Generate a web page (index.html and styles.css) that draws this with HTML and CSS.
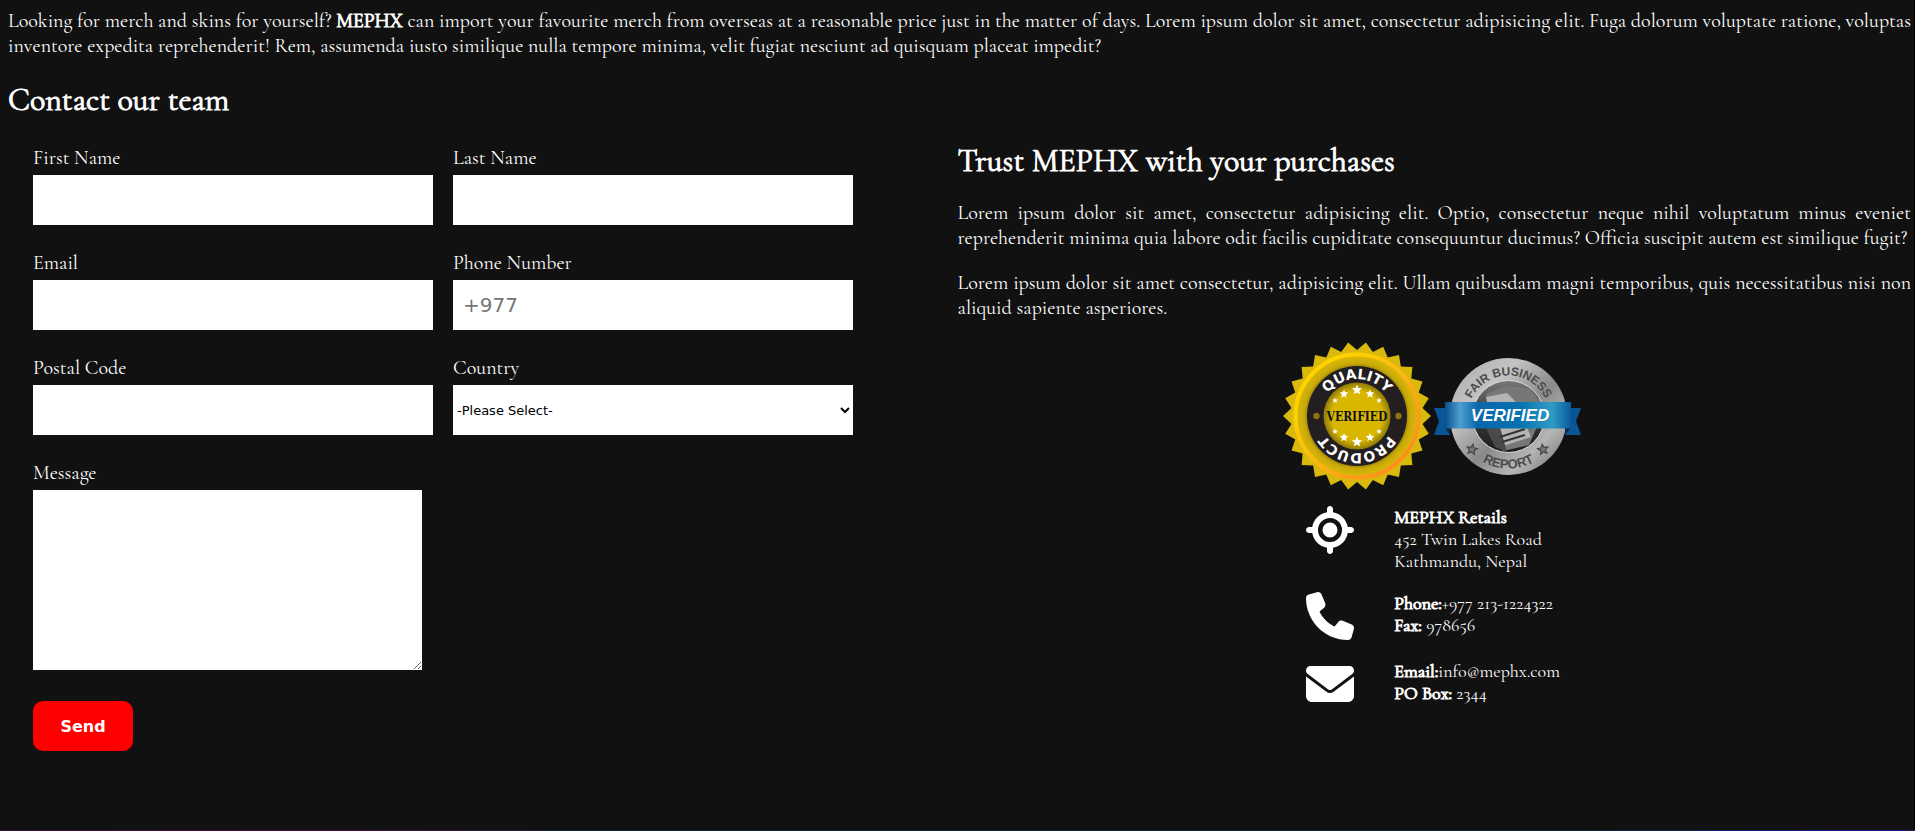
FILE: index.html
```
<!DOCTYPE html>
<html lang="en">
<head>
<meta charset="utf-8">
<title>MEPHX - Contact</title>
<link rel="stylesheet" href="styles.css">
</head>
<body>
<main class="page">
  <p class="text">Looking for merch and skins for yourself? <strong>MEPHX</strong> can import your favourite merch from overseas at a reasonable price just in the matter of days. Lorem ipsum dolor sit amet, consectetur adipisicing elit. Fuga dolorum voluptate ratione, voluptas inventore expedita reprehenderit! Rem, assumenda iusto similique nulla tempore minima, velit fugiat nesciunt ad quisquam placeat impedit?</p>
  <h1 class="heading">Contact our team</h1>
  <div class="columns">
    <form class="form">
      <div class="field"><label for="first">First Name</label><input class="control" id="first" type="text"></div>
      <div class="field"><label for="last">Last Name</label><input class="control" id="last" type="text"></div>
      <div class="field"><label for="email">Email</label><input class="control" id="email" type="email"></div>
      <div class="field"><label for="phone">Phone Number</label><input class="control" id="phone" type="tel" placeholder="+977"></div>
      <div class="field"><label for="postal">Postal Code</label><input class="control" id="postal" type="text"></div>
      <div class="field"><label for="country">Country</label><select class="control select" id="country"><option>-Please Select-</option><option>Nepal</option></select></div>
      <div class="field"><label for="message">Message</label><textarea class="message" id="message"></textarea></div>
      <div class="actions"><button class="send" type="submit">Send</button></div>
    </form>
    <section class="trust">
      <h2 class="heading">Trust MEPHX with your purchases</h2>
      <p class="text">Lorem ipsum dolor sit amet, consectetur adipisicing elit. Optio, consectetur neque nihil voluptatum minus eveniet reprehenderit minima quia labore odit facilis cupiditate consequuntur ducimus? Officia suscipit autem est similique fugit?</p>
      <p class="text">Lorem ipsum dolor sit amet consectetur, adipisicing elit. Ullam quibusdam magni temporibus, quis necessitatibus nisi non aliquid sapiente asperiores.</p>
      <div class="badges">
        <svg class="badge" viewBox="-75 -75 150 150" role="img" aria-label="Quality product verified">
          <defs>
            <linearGradient id="rim" x1="0" y1="0" x2="1" y2="1"><stop offset="0.2" stop-color="#ffd200"/><stop offset="0.5" stop-color="#fdb913"/><stop offset="0.85" stop-color="#ff8f1c"/></linearGradient>
            <radialGradient id="gold"><stop offset="0.76" stop-color="#7a6806"/><stop offset="0.86" stop-color="#c9a90a"/><stop offset="1" stop-color="#dcbb08"/></radialGradient>
            <radialGradient id="core"><stop offset="0.75" stop-color="#d9b700"/><stop offset="1" stop-color="#8f7a08"/></radialGradient>
            <path id="teeth" d="M0-66L8.9-73.5 15.8-64.1 26.2-69.2 30.7-58.4 42-60.9 43.8-49.4 55.4-49.1 54.3-37.5 65.5-34.4 61.7-23.4 71.8-17.7 65.5-8 74 0 65.5 8 71.8 17.7 61.7 23.4 65.5 34.4 54.3 37.5 55.4 49.1 43.8 49.4 42 60.9 30.7 58.4 26.2 69.2 15.8 64.1 8.9 73.5 0 66Z"/>
            <path id="star" d="M0-1L.26-.36.95-.31.42.14.59.81 0 .44-.59.81-.42.14-.95-.31-.26-.36Z"/>
            <path id="arcTop" d="M-37 0A37 37 0 0 1 37 0"/>
            <path id="arcBottom" d="M37 0A37 37 0 0 1-37 0"/>
          </defs>
          <g fill="#d9b90c"><use href="#teeth"/><use href="#teeth" transform="scale(-1 1)"/><circle r="66"/></g>
          <circle r="61.5" fill="url(#gold)" stroke="url(#rim)" stroke-width="4"/>
          <circle r="50" fill="#231f20"/>
          <circle r="33.5" fill="url(#core)"/>
          <g fill="#8a7412"><circle cx="-40.5" r="3.2"/><circle cx="41.5" r="3.2"/></g>
          <g class="seal-arc"><text><textPath href="#arcTop" startOffset="50%">QUALITY</textPath></text><text><textPath href="#arcBottom" startOffset="50%">PRODUCT</textPath></text></g>
          <g fill="#fff">
            <use href="#star" transform="translate(0 -26) scale(5.4)"/><use href="#star" transform="translate(-13 -22) scale(4.6)"/><use href="#star" transform="translate(13 -22) scale(4.6)"/><use href="#star" transform="translate(-22 -15.5) scale(3)"/><use href="#star" transform="translate(22 -15.5) scale(3)"/>
            <use href="#star" transform="translate(0 26) scale(5.4)"/><use href="#star" transform="translate(-13 21.5) scale(4.6)"/><use href="#star" transform="translate(13 21.5) scale(4.6)"/><use href="#star" transform="translate(-22 15.5) scale(3)"/><use href="#star" transform="translate(22 15.5) scale(3)"/>
          </g>
          <text class="seal-title" y="5">VERIFIED</text>
        </svg>
        <svg class="badge" viewBox="0 0 150 150" role="img" aria-label="Fair business report verified">
          <defs>
            <linearGradient id="steel" x1="0" y1="0" x2="1" y2="1"><stop offset="0" stop-color="#aaa"/><stop offset="0.3" stop-color="#c4c4c4"/><stop offset="0.55" stop-color="#8a8a8a"/><stop offset="0.75" stop-color="#b5b5b5"/><stop offset="1" stop-color="#666"/></linearGradient>
            <linearGradient id="dark" x1="0" y1="0" x2="0" y2="1"><stop offset="0" stop-color="#777"/><stop offset="0.5" stop-color="#3a3a3a"/><stop offset="1" stop-color="#1c1c1c"/></linearGradient>
            <linearGradient id="ribbon"><stop offset="0" stop-color="#0b4f91"/><stop offset="0.12" stop-color="#4f9fd0"/><stop offset="0.26" stop-color="#0a66ab"/><stop offset="0.6" stop-color="#0672b0"/><stop offset="0.85" stop-color="#2f9cc4"/><stop offset="1" stop-color="#0b5a9b"/></linearGradient>
            <path id="ringTop" d="M34.5 75.500A41 41 0 0 1 116.500 75.500"/>
            <path id="ringBottom" d="M23.500 75.500A52 52 0 0 0 127.500 75.500"/>
          </defs>
          <circle cx="75.500" cy="75.500" r="58.500" fill="url(#steel)"/>
          <circle cx="75.500" cy="75.500" r="36" fill="url(#dark)" stroke="#ddd"/>
          <path d="M53 53L72 45 96 47 108 61 103 88 96 104 70 110 58 95Z" fill="#777"/>
          <path d="M53 56L74 52 83 61 98 96 64 107Z" fill="#b4b4b4"/>
          <path d="M53 87L66 83 74 111 62 106Z" fill="#4a4a4a"/>
          <path d="M67 96L92 88M69 101L92 94" stroke="#333" stroke-width="2"/>
          <g class="ring-text"><text><textPath href="#ringTop" startOffset="50%">FAIR BUSINESS</textPath></text><text class="ring-foot"><textPath href="#ringBottom" startOffset="50%">REPORT</textPath></text></g>
          <g fill="#777" stroke="#444" stroke-width="0.200"><use href="#star" transform="translate(39 108.500) rotate(10) scale(5.500)"/><use href="#star" transform="translate(110 108.500) rotate(-10) scale(5.500)"/></g>
          <path d="M1 67H17V94H1L6 80ZM148 67H132V94H148L143 80Z" fill="#0a5596"/>
          <path d="M12 87L17 94V87ZM138 87L132 94V87Z" fill="#062b55"/>
          <path d="M12 61H138V87.500H12Z" fill="url(#ribbon)"/>
          <text class="ribbon-title" x="77" y="80">VERIFIED</text>
        </svg>
      </div>
      <div class="contacts">
        <svg class="icon" viewBox="0 0 512 512" aria-hidden="true"><path fill-rule="evenodd" d="M256 0c17.700 0 32 14.300 32 32V66.700C368.400 80.100 431.900 143.600 445.300 224H480c17.700 0 32 14.300 32 32s-14.300 32-32 32H445.300C431.900 368.400 368.400 431.900 288 445.300V480c0 17.700-14.300 32-32 32s-32-14.300-32-32V445.300C143.600 431.900 80.100 368.400 66.700 288H32c-17.700 0-32-14.300-32-32s14.300-32 32-32H66.700C80.100 143.600 143.600 80.100 224 66.700V32c0-17.700 14.300-32 32-32zM128 256a128 128 0 1 0 256 0 128 128 0 1 0-256 0zm128-80a80 80 0 1 1 0 160 80 80 0 1 1 0-160z"/></svg>
        <p class="detail"><strong>MEPHX Retails</strong><br>452 Twin Lakes Road<br>Kathmandu, Nepal</p>
        <svg class="icon" viewBox="0 0 512 512" aria-hidden="true"><path d="M164.900 24.600c-7.700-18.600-28-28.500-47.400-23.200l-88 24C12.100 30.200 0 46 0 64C0 311.400 200.600 512 448 512c18 0 33.800-12.100 38.600-29.500l24-88c5.300-19.400-4.600-39.700-23.200-47.400l-96-40c-16.300-6.800-35.200-2.100-46.300 11.600L304.700 368C234.300 334.700 177.300 277.700 144 207.300L193.300 167c13.700-11.200 18.400-30 11.600-46.300l-40-96z"/></svg>
        <p class="detail"><strong>Phone:</strong>+977 213-1224322<br><strong>Fax:</strong> 978656</p>
        <svg class="icon" viewBox="0 0 512 512" aria-hidden="true"><path d="M48 64C21.500 64 0 85.500 0 112c0 15.100 7.100 29.300 19.200 38.400L236.800 313.600c11.400 8.500 27 8.500 38.400 0L492.800 150.400c12.100-9.100 19.200-23.300 19.200-38.400c0-26.500-21.500-48-48-48H48zM0 176V384c0 35.300 28.700 64 64 64H448c35.300 0 64-28.700 64-64V176L294.400 339.200c-22.800 17.100-54 17.100-76.800 0L0 176z"/></svg>
        <p class="detail"><strong>Email:</strong>info@mephx.com<br><strong>PO Box:</strong> 2344</p>
      </div>
    </section>
  </div>
</main>
<div class="rule"></div>
</body>
</html>
```
FILE: styles.css
```
* { box-sizing: border-box; }
body {
  margin: 0;
  min-height: 100vh;
  display: flex;
  flex-direction: column;
  background: #111;
  color: #fff;
  font: 20px/25px "Cormorant Garamond", "Liberation Serif", serif;
}
.page { flex: 1; padding: 9px 7px 8px 8px; border-right: 1px solid #000; }
.rule { height: 1px; background: linear-gradient(90deg, #400a48, #520d40 18%, #10263c 30%, #10263c 80%, #1a1a80 95%); }
.text { margin: 0 -4px 20px 0; text-align: justify; }
.heading { margin: 0; font-size: 32px; line-height: 40px; }
.heading, strong { font-weight: 400; -webkit-text-stroke: 1px #fff; }
.columns { display: grid; grid-template-columns: 1fr 1fr; margin-top: 25px; }
.page > .text { margin-bottom: 21px; }
.form {
  display: grid;
  grid-template-columns: 1fr 1fr;
  gap: 25px 20px;
  align-content: start;
  max-width: 845px;
  padding-left: 25px;
}
.field { display: flex; flex-direction: column; gap: 3px; line-height: 27px; }
.control {
  width: 100%;
  height: 50px;
  padding: 10px;
  border: 0;
  border-radius: 0;
  background: #fff;
  font: 20px "DejaVu Sans", sans-serif;
}
.select { padding: 0; font-size: 13px; color: #000; }
.message {
  width: 389px;
  max-width: 100%;
  height: 180px;
  padding: 10px;
  border: 0;
  font: 20px "DejaVu Sans", sans-serif;
}
.actions { grid-column: 1 / -1; padding-top: 6px; }
.send {
  display: block;
  width: 100px;
  height: 50px;
  border: 0;
  border-radius: 10px;
  background: #f00;
  color: #fff;
  font: 700 16px "DejaVu Sans", sans-serif;
}
.trust .heading { margin-bottom: 24px; line-height: 32px; }
.badges { display: flex; justify-content: center; gap: 1px; }
.badge { width: 150px; height: 150px; }
.seal-arc { fill: #fff; font: 700 14px "DejaVu Sans", sans-serif; text-anchor: middle; }
.seal-title { fill: #111; font: 700 12px "DejaVu Serif Condensed", "Liberation Serif", serif; text-anchor: middle; }
.ring-text { fill: #4c4c4c; font: 700 12px "Liberation Sans", sans-serif; text-anchor: middle; }
.ring-foot { font-size: 13px; }
.ribbon-title { fill: #fff; font: italic 700 17px "Liberation Sans", sans-serif; text-anchor: middle; }
.contacts {
  display: grid;
  grid-template-columns: 48px 164px;
  justify-content: center;
  gap: 20px 40px;
  margin-top: 15px;
}
.icon { width: 48px; height: 48px; fill: #fff; }
.detail { margin: 0; font-size: 18px; line-height: 22px; white-space: nowrap; }
```
